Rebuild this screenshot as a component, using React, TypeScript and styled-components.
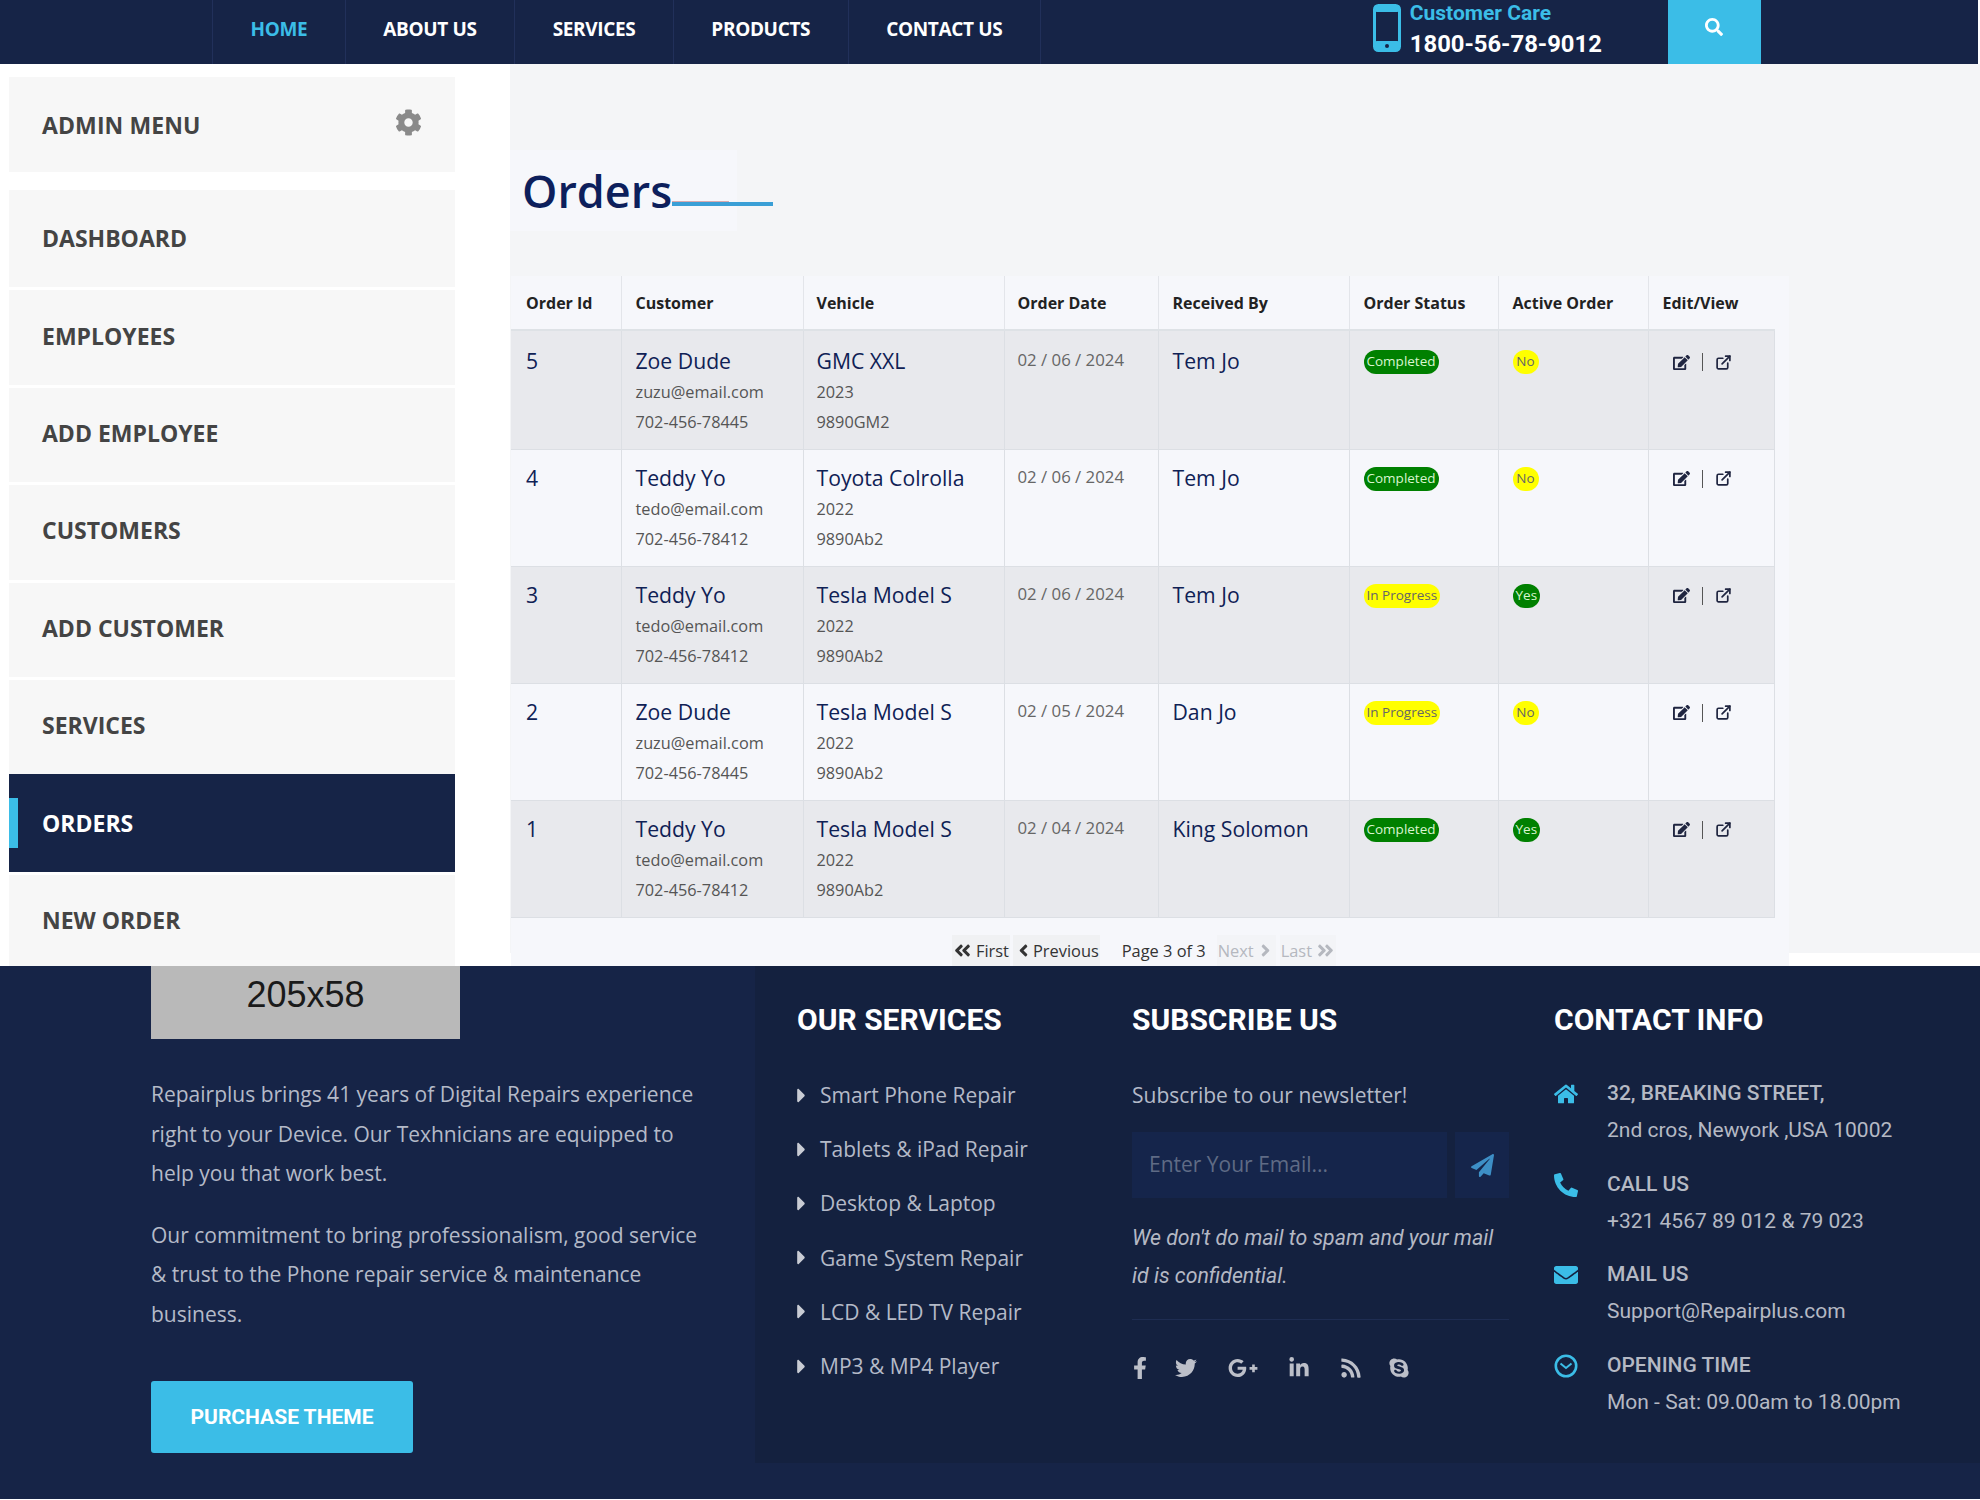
import * as React from 'react';
import styled, { createGlobalStyle } from 'styled-components';
import {
  FaAngleDoubleLeft,
  FaAngleDoubleRight,
  FaAngleLeft,
  FaAngleRight,
  FaCaretRight,
  FaCog,
  FaEdit,
  FaEnvelope,
  FaFacebookF,
  FaGooglePlusG,
  FaHome,
  FaLinkedinIn,
  FaPaperPlane,
  FaPhoneAlt,
  FaRss,
  FaSearch,
  FaSkype,
  FaTwitter,
} from 'react-icons/fa';
import { FiExternalLink } from 'react-icons/fi';

const navy = '#162447';
const sky = '#3bbde7';
const openSans = '"Open Sans", "Liberation Sans", sans-serif';
const roboto = 'Roboto, "Liberation Sans", sans-serif';

const GlobalStyle = createGlobalStyle`
  html, body {
    margin: 0;
    padding: 0;
    background: #fff;
  }
  * {
    box-sizing: border-box;
  }
`;

const Page = styled.div`
  width: 1980px;
  height: 1500px;
  overflow: hidden;
  font-family: ${openSans};
`;

const Header = styled.header`
  display: flex;
  width: 1978px;
  height: 64px;
  padding-left: 212px;
  background: ${navy};
`;

const Nav = styled.nav`
  display: flex;
  border-right: 1px solid #21305a;
`;

const NavLink = styled.a<{ $active?: boolean }>`
  display: flex;
  align-items: center;
  height: 64px;
  padding: 0 37.5px 6px;
  border-left: 1px solid #21305a;
  font-size: 19px;
  font-weight: 700;
  letter-spacing: -0.35px;
  color: ${(p) => (p.$active ? sky : '#fff')};
`;

const CareBlock = styled.div`
  display: flex;
  gap: 9px;
  margin-left: 332px;
  width: 295px;
  padding-top: 4px;
`;

const CareText = styled.div`
  font-family: ${roboto};
  font-weight: 700;
`;

const CareLabel = styled.div`
  height: 26px;
  font-size: 21px;
  line-height: 19px;
  color: ${sky};
`;

const CareNumber = styled.div`
  font-size: 23.8px;
  line-height: 28px;
  color: #fff;
`;

const SearchButton = styled.div`
  display: flex;
  justify-content: center;
  width: 93px;
  height: 64px;
  padding-top: 18px;
  background: ${sky};
  color: #fff;
  font-size: 18px;
`;

const Body = styled.div`
  display: flex;
  height: 902px;
`;

const Sidebar = styled.aside`
  width: 510px;
  height: 902px;
  padding: 13px 55px 0 9px;
  overflow: hidden;
  background: #fff;
`;

const MenuTitle = styled.div`
  display: flex;
  align-items: center;
  justify-content: space-between;
  height: 95px;
  margin-bottom: 18px;
  padding: 0 33px;
  background: #f7f7f7;
  font-size: 23px;
  font-weight: 700;
  letter-spacing: 0.1px;
  color: #444;
  svg {
    margin-top: -4px;
    font-size: 27px;
    color: #8a8a8a;
  }
`;

const MenuItem = styled.a<{ $active?: boolean }>`
  position: relative;
  display: flex;
  align-items: center;
  height: 97.4px;
  padding: ${(p) => (p.$active ? '0 0 0 33px' : '0 0 4px 33px')};
  background: ${(p) => (p.$active ? navy : '#f7f7f7')};
  border-top: ${(p) => (p.$active ? '0' : '3px solid #fff')};
  font-size: 23px;
  font-weight: 700;
  color: ${(p) => (p.$active ? '#fff' : '#444')};
  &:first-of-type {
    border-top: 0;
    padding-bottom: 2px;
  }
  ${(p) =>
    p.$active
      ? `&::before {
    content: '';
    position: absolute;
    left: 0;
    top: 24px;
    width: 9px;
    height: 50px;
    background: ${sky};
  }`
      : ''}
`;

const Main = styled.main`
  width: 1470px;
  height: 902px;
  padding-top: 86px;
  overflow: hidden;
  background: linear-gradient(#f4f5f7 889px, #fff 889px);
`;

const TitleBlock = styled.div`
  width: 227px;
  height: 81px;
  margin-bottom: 45px;
  padding-left: 12px;
  background: #f6f7fb;
`;

const Title = styled.h1`
  position: relative;
  display: inline-block;
  margin: 0;
  font-size: 45px;
  font-weight: 600;
  line-height: 81px;
  color: #0d1f5c;
  &::before {
    content: '';
    position: absolute;
    left: 100%;
    top: 51px;
    width: 57px;
    height: 1px;
    background: #d9a9ae;
  }
  &::after {
    content: '';
    position: absolute;
    left: 100%;
    top: 52px;
    width: 101px;
    height: 4px;
    background: #3a9fd6;
  }
`;

const TablePanel = styled.section`
  width: 1278px;
  height: 690px;
  margin-left: 1px;
  background: #f6f7fb;
`;

const Table = styled.table`
  width: 1263px;
  table-layout: fixed;
  border-collapse: collapse;
`;

const Th = styled.th<{ $width: number }>`
  width: ${(p) => p.$width}px;
  height: 54px;
  padding: 0 0 0 14px;
  border-left: 1px solid #e3e5ea;
  border-bottom: 2px solid #dee2e6;
  font-size: 16px;
  font-weight: 700;
  text-align: left;
  color: #222;
  &:first-child {
    padding-left: 15px;
    border-left: 0;
  }
  &:nth-child(3),
  &:nth-child(4) {
    padding-left: 13px;
  }
`;

const Row = styled.tr<{ $shaded: boolean }>`
  background: ${(p) => (p.$shaded ? '#e8e9ed' : '#f6f7fb')};
  &:first-child td {
    height: 119px;
    padding-top: 15px;
  }
`;

const Td = styled.td`
  height: 117px;
  padding: 13px 0 0 14px;
  border: 1px solid #dcdfe4;
  border-top: 0;
  vertical-align: top;
  &:first-child {
    padding-left: 15px;
    border-left: 0;
  }
  &:nth-child(3),
  &:nth-child(4) {
    padding-left: 13px;
  }
`;

const Lead = styled.div`
  font-size: 21.2px;
  font-weight: 500;
  line-height: 30px;
  color: #0f2155;
`;

const Sub = styled.div`
  padding-top: 1px;
  margin-bottom: -1px;
  font-size: 16.3px;
  line-height: 30px;
  color: #555;
`;

const DateText = styled.div`
  font-size: 16.8px;
  line-height: 28px;
  color: #666;
`;

const Badge = styled.span<{ $tone: 'green' | 'yellow' }>`
  display: block;
  width: fit-content;
  min-width: 26px;
  height: 24px;
  margin-top: 4px;
  padding: 0 3px;
  border-radius: 12px;
  font-size: 13.5px;
  line-height: 23px;
  text-align: center;
  white-space: nowrap;
  background: ${(p) => (p.$tone === 'green' ? '#008000' : '#ffff00')};
  color: ${(p) => (p.$tone === 'green' ? '#d9f5d0' : '#666')};
`;

const Actions = styled.div`
  display: flex;
  align-items: center;
  gap: 12px;
  margin: 7px 0 0 10px;
  color: #1f2540;
  font-size: 17px;
`;

const ActionRule = styled.span`
  width: 1px;
  height: 18px;
  background: #555;
`;

const Pager = styled.div`
  display: flex;
  justify-content: center;
  width: 1263px;
  height: 31px;
  margin-top: 17px;
  padding-left: 3px;
  font-size: 16.4px;
  line-height: 31px;
  color: #333;
`;

const PagerButton = styled.span<{ $off?: boolean; $gap: number; $iconGap: number }>`
  display: flex;
  align-items: center;
  gap: ${(p) => p.$iconGap}px;
  margin-right: ${(p) => p.$gap}px;
  padding: 0 1px;
  background: ${(p) => (p.$off ? '#f3f4f7' : '#f0f1f3')};
  color: ${(p) => (p.$off ? '#b5b8bf' : '#333')};
  svg {
    font-size: 19px;
  }
`;

const PagerText = styled.span`
  margin-right: 11px;
`;

const Footer = styled.footer`
  display: flex;
  height: 533px;
  background: ${navy};
`;

const FooterIntro = styled.div`
  width: 755px;
  padding-left: 151px;
`;

const LogoBox = styled.div`
  width: 309px;
  height: 73px;
  padding-bottom: 16px;
  background: #b9b9b9;
  font-family: 'Liberation Sans', sans-serif;
  font-size: 36px;
  line-height: 57px;
  text-align: center;
  color: #1a1a1a;
`;

const IntroText = styled.p`
  width: 560px;
  margin: 0 0 22px;
  font-size: 21px;
  line-height: 39.5px;
  color: #b4bac8;
  &:first-of-type {
    margin-top: 36px;
  }
`;

const PurchaseButton = styled.a`
  display: flex;
  align-items: center;
  justify-content: center;
  width: 262px;
  height: 72px;
  margin-top: 47px;
  border-radius: 3px;
  background: ${sky};
  font-family: ${roboto};
  font-size: 21px;
  font-weight: 700;
  color: #fff;
`;

const FooterPanel = styled.div`
  display: flex;
  width: 1225px;
  height: 497px;
  padding: 37px 0 0 42px;
  background: #14213f;
`;

const Column = styled.div<{ $width: number }>`
  width: ${(p) => p.$width}px;
`;

const ColumnTitle = styled.h3<{ $gap: number }>`
  margin: 0 0 ${(p) => p.$gap}px;
  font-family: ${roboto};
  font-size: 30px;
  font-weight: 700;
  line-height: 34px;
  color: #fff;
`;

const ServiceItem = styled.div`
  display: flex;
  align-items: center;
  height: 54.2px;
  font-size: 21px;
  color: #b4bac8;
  svg {
    flex: none;
    width: 9px;
    height: 23px;
    margin-right: 14px;
    color: #c9ccd4;
  }
`;

const NewsText = styled.div`
  font-size: 21px;
  line-height: 54px;
  color: #b4bac8;
`;

const SubscribeForm = styled.div`
  display: flex;
  gap: 8px;
  margin-top: 10px;
`;

const EmailField = styled.div`
  width: 315px;
  height: 66px;
  padding-left: 17px;
  background: #15254b;
  font-size: 21px;
  line-height: 64px;
  color: #5f6b85;
`;

const SendButton = styled.div`
  display: flex;
  align-items: center;
  justify-content: center;
  width: 54px;
  height: 66px;
  background: #15254b;
  font-size: 23px;
  color: #3d8fc6;
`;

const Disclaimer = styled.p`
  width: 377px;
  margin: 21px 0 0;
  padding-bottom: 25px;
  border-bottom: 1px solid #1e2d52;
  font-family: ${roboto};
  font-size: 21.3px;
  font-style: italic;
  font-weight: 400;
  line-height: 37.5px;
  color: #b4b8c4;
`;

const SocialRow = styled.div`
  display: flex;
  align-items: center;
  height: 30px;
  margin: 33px 0 0 -3px;
  font-size: 22px;
  color: #bcbfc8;
`;

const SocialIcon = styled.span<{ $width: number }>`
  display: flex;
  width: ${(p) => p.$width}px;
`;

const ContactItem = styled.div`
  display: flex;
  height: 90.5px;
`;

const ContactIcon = styled.div`
  width: 53px;
  padding-top: 8px;
  font-size: 24px;
  line-height: 1;
  color: ${sky};
`;

const ContactText = styled.div`
  padding-top: 1px;
  font-family: ${roboto};
  font-size: 21px;
  line-height: 37px;
  color: #b5b9c4;
`;

const ContactHead = styled.div`
  font-weight: 500;
`;

const orders = [
  { id: 5, name: 'Zoe Dude', mail: 'zuzu@email.com', phone: '702-456-78445', car: 'GMC XXL', year: '2023', tag: '9890GM2', date: '02 / 06 / 2024', by: 'Tem Jo', done: true, active: false },
  { id: 4, name: 'Teddy Yo', mail: 'tedo@email.com', phone: '702-456-78412', car: 'Toyota Colrolla', year: '2022', tag: '9890Ab2', date: '02 / 06 / 2024', by: 'Tem Jo', done: true, active: false },
  { id: 3, name: 'Teddy Yo', mail: 'tedo@email.com', phone: '702-456-78412', car: 'Tesla Model S', year: '2022', tag: '9890Ab2', date: '02 / 06 / 2024', by: 'Tem Jo', done: false, active: true },
  { id: 2, name: 'Zoe Dude', mail: 'zuzu@email.com', phone: '702-456-78445', car: 'Tesla Model S', year: '2022', tag: '9890Ab2', date: '02 / 05 / 2024', by: 'Dan Jo', done: false, active: false },
  { id: 1, name: 'Teddy Yo', mail: 'tedo@email.com', phone: '702-456-78412', car: 'Tesla Model S', year: '2022', tag: '9890Ab2', date: '02 / 04 / 2024', by: 'King Solomon', done: true, active: true },
];

const columns = [
  { label: 'Order Id', width: 110 },
  { label: 'Customer', width: 182 },
  { label: 'Vehicle', width: 201 },
  { label: 'Order Date', width: 154 },
  { label: 'Received By', width: 191 },
  { label: 'Order Status', width: 149 },
  { label: 'Active Order', width: 150 },
  { label: 'Edit/View', width: 126 },
];

const menu = ['DASHBOARD', 'EMPLOYEES', 'ADD EMPLOYEE', 'CUSTOMERS', 'ADD CUSTOMER', 'SERVICES', 'ORDERS', 'NEW ORDER'];

const services = ['Smart Phone Repair', 'Tablets & iPad Repair', 'Desktop & Laptop', 'Game System Repair', 'LCD & LED TV Repair', 'MP3 & MP4 Player'];

const PhoneGlyph = () => (
  <svg width="28" height="48" viewBox="0 0 28 48">
    <rect x="1.5" y="1.5" width="25" height="45" rx="4" fill="none" stroke={sky} strokeWidth="3" />
    <rect x="1" y="1" width="26" height="7" rx="3" fill={sky} />
    <rect x="1" y="37" width="26" height="10" rx="3" fill={sky} />
    <circle cx="14" cy="42" r="2" fill={navy} />
  </svg>
);

const ClockGlyph = () => (
  <svg width="24" height="24" viewBox="0 0 24 24" fill="none" stroke={sky}>
    <circle cx="12" cy="12" r="10.2" strokeWidth="2.6" />
    <path d="M6.5 9.5 12 14l5.5-4.5" strokeWidth="2" />
  </svg>
);

const App: React.FC = () => {
  return (
    <Page>
      <GlobalStyle />
      <Header>
        <Nav>
          <NavLink $active>HOME</NavLink>
          <NavLink>ABOUT US</NavLink>
          <NavLink>SERVICES</NavLink>
          <NavLink>PRODUCTS</NavLink>
          <NavLink>CONTACT US</NavLink>
        </Nav>
        <CareBlock>
          <PhoneGlyph />
          <CareText>
            <CareLabel>Customer Care</CareLabel>
            <CareNumber>1800-56-78-9012</CareNumber>
          </CareText>
        </CareBlock>
        <SearchButton>
          <FaSearch />
        </SearchButton>
      </Header>
      <Body>
        <Sidebar>
          <MenuTitle>
            ADMIN MENU
            <FaCog />
          </MenuTitle>
          {menu.map((item) => (
            <MenuItem key={item} $active={item === 'ORDERS'}>
              {item}
            </MenuItem>
          ))}
        </Sidebar>
        <Main>
          <TitleBlock>
            <Title>Orders</Title>
          </TitleBlock>
          <TablePanel>
            <Table>
              <thead>
                <tr>
                  {columns.map((col) => (
                    <Th key={col.label} $width={col.width}>
                      {col.label}
                    </Th>
                  ))}
                </tr>
              </thead>
              <tbody>
                {orders.map((order, index) => (
                  <Row key={order.id} $shaded={index % 2 === 0}>
                    <Td>
                      <Lead>{order.id}</Lead>
                    </Td>
                    <Td>
                      <Lead>{order.name}</Lead>
                      <Sub>{order.mail}</Sub>
                      <Sub>{order.phone}</Sub>
                    </Td>
                    <Td>
                      <Lead>{order.car}</Lead>
                      <Sub>{order.year}</Sub>
                      <Sub>{order.tag}</Sub>
                    </Td>
                    <Td>
                      <DateText>{order.date}</DateText>
                    </Td>
                    <Td>
                      <Lead>{order.by}</Lead>
                    </Td>
                    <Td>
                      <Badge $tone={order.done ? 'green' : 'yellow'}>{order.done ? 'Completed' : 'In Progress'}</Badge>
                    </Td>
                    <Td>
                      <Badge $tone={order.active ? 'green' : 'yellow'}>{order.active ? 'Yes' : 'No'}</Badge>
                    </Td>
                    <Td>
                      <Actions>
                        <FaEdit />
                        <ActionRule />
                        <FiExternalLink strokeWidth={2.4} />
                      </Actions>
                    </Td>
                  </Row>
                ))}
              </tbody>
            </Table>
            <Pager>
              <PagerButton $gap={3} $iconGap={4}>
                <FaAngleDoubleLeft />
                First
              </PagerButton>
              <PagerButton $gap={22} $iconGap={0}>
                <FaAngleLeft />
                Previous
              </PagerButton>
              <PagerText>Page 3 of 3</PagerText>
              <PagerButton $off $gap={4} $iconGap={2}>
                Next
                <FaAngleRight />
              </PagerButton>
              <PagerButton $off $gap={0} $iconGap={4}>
                Last
                <FaAngleDoubleRight />
              </PagerButton>
            </Pager>
          </TablePanel>
        </Main>
      </Body>
      <Footer>
        <FooterIntro>
          <LogoBox>205x58</LogoBox>
          <IntroText>Repairplus brings 41 years of Digital Repairs experience right to your Device. Our Texhnicians are equipped to help you that work best.</IntroText>
          <IntroText>Our commitment to bring professionalism, good service &amp; trust to the Phone repair service &amp; maintenance business.</IntroText>
          <PurchaseButton>PURCHASE THEME</PurchaseButton>
        </FooterIntro>
        <FooterPanel>
          <Column $width={335}>
            <ColumnTitle $gap={31}>OUR SERVICES</ColumnTitle>
            {services.map((service) => (
              <ServiceItem key={service}>
                <FaCaretRight />
                {service}
              </ServiceItem>
            ))}
          </Column>
          <Column $width={422}>
            <ColumnTitle $gap={31}>SUBSCRIBE US</ColumnTitle>
            <NewsText>Subscribe to our newsletter!</NewsText>
            <SubscribeForm>
              <EmailField>Enter Your Email...</EmailField>
              <SendButton>
                <FaPaperPlane />
              </SendButton>
            </SubscribeForm>
            <Disclaimer>We don&apos;t do mail to spam and your mail id is confidential.</Disclaimer>
            <SocialRow>
              <SocialIcon $width={46}>
                <FaFacebookF />
              </SocialIcon>
              <SocialIcon $width={53}>
                <FaTwitter />
              </SocialIcon>
              <SocialIcon $width={60}>
                <FaGooglePlusG size={30} />
              </SocialIcon>
              <SocialIcon $width={52}>
                <FaLinkedinIn />
              </SocialIcon>
              <SocialIcon $width={48}>
                <FaRss />
              </SocialIcon>
              <SocialIcon $width={24}>
                <FaSkype />
              </SocialIcon>
            </SocialRow>
          </Column>
          <Column $width={380}>
            <ColumnTitle $gap={37}>CONTACT INFO</ColumnTitle>
            <ContactItem>
              <ContactIcon>
                <FaHome />
              </ContactIcon>
              <ContactText>
                <ContactHead>32, BREAKING STREET,</ContactHead>
                2nd cros, Newyork ,USA 10002
              </ContactText>
            </ContactItem>
            <ContactItem>
              <ContactIcon>
                <FaPhoneAlt />
              </ContactIcon>
              <ContactText>
                <ContactHead>CALL US</ContactHead>
                +321 4567 89 012 &amp; 79 023
              </ContactText>
            </ContactItem>
            <ContactItem>
              <ContactIcon>
                <FaEnvelope />
              </ContactIcon>
              <ContactText>
                <ContactHead>MAIL US</ContactHead>
                Support@Repairplus.com
              </ContactText>
            </ContactItem>
            <ContactItem>
              <ContactIcon>
                <ClockGlyph />
              </ContactIcon>
              <ContactText>
                <ContactHead>OPENING TIME</ContactHead>
                Mon - Sat: 09.00am to 18.00pm
              </ContactText>
            </ContactItem>
          </Column>
        </FooterPanel>
      </Footer>
    </Page>
  );
};

export default App;
